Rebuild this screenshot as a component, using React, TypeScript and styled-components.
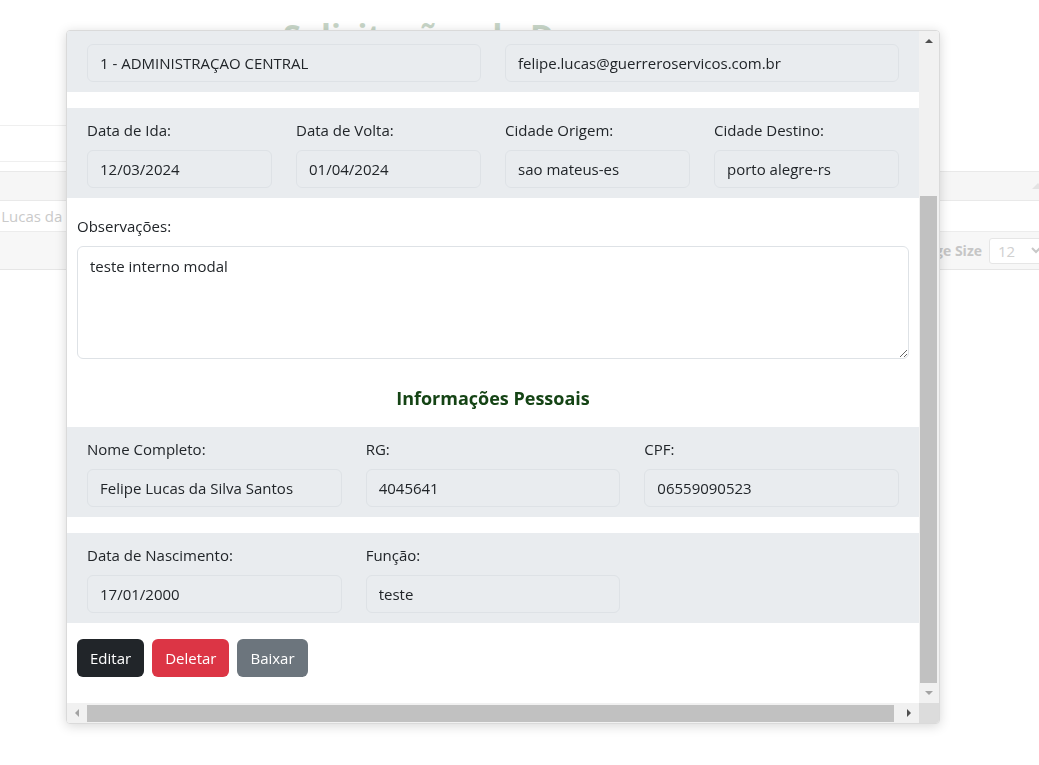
import React from 'react';
import styled, { createGlobalStyle } from 'styled-components';

const GlobalStyle = createGlobalStyle`
  html, body { margin: 0; padding: 0; background: #ffffff; }
  body {
    font-family: "Open Sans", "Noto Sans", "DejaVu Sans", sans-serif;
    color: #212529;
    overflow: hidden;
  }
  * { box-sizing: border-box; }
`;

/* ---------- background page (faded behind the modal) ---------- */

const Page = styled.div`
  width: 1039px;
  height: 765px;
  overflow: hidden;
`;

const Title = styled.h1`
  margin: 0;
  padding: 16px 0 0 283px;
  font-size: 32.5px;
  line-height: 39px;
  font-weight: 700;
  color: #c7d5c7;
  white-space: nowrap;
`;

const Scrolled = styled.div`
  margin-left: -52px;
  width: 1120px;
`;

const SearchBox = styled.div`
  margin-top: 70px;
  width: 720px;
  height: 37px;
  border: 1px solid #efefef;
  border-radius: 3px;
`;

const Table = styled.div`
  margin-top: 9px;
  display: flex;
  flex-direction: column;
`;

const HeadRow = styled.div`
  height: 30px;
  background: #f6f6f6;
  border-top: 1px solid #e9e9e9;
  border-bottom: 1px solid #e9e9e9;
  display: flex;
  justify-content: flex-end;
  align-items: center;
  padding-right: 24px;
`;

const SortCaret = styled.span`
  width: 0;
  height: 0;
  border-left: 6px solid transparent;
  border-right: 6px solid transparent;
  border-bottom: 6px solid #e3e3e3;
`;

const BodyRow = styled.div`
  height: 30px;
  display: flex;
  align-items: center;
  padding-left: 8px;
  font-size: 15px;
  color: #cacaca;
`;

const FootRow = styled.div`
  height: 39px;
  background: #f7f7f7;
  border-top: 1px solid #ececec;
  border-bottom: 1px solid #e6e6e6;
  display: flex;
  justify-content: flex-end;
  align-items: center;
  gap: 7px;
  padding-right: 17px;
`;

const PageSizeLabel = styled.span`
  font-size: 14px;
  font-weight: 700;
  color: #c6c6c6;
`;

const PageSizeSelect = styled.div`
  width: 62px;
  height: 26px;
  background: #ffffff;
  border: 1px solid #e6e6e6;
  border-radius: 3px;
  display: flex;
  align-items: center;
  justify-content: space-between;
  padding: 0 9px 0 8px;
  font-size: 15px;
  color: #d0d0d0;
`;

/* ---------- modal ---------- */

const Modal = styled.div`
  position: fixed;
  left: 66px;
  top: 30px;
  width: 874px;
  height: 694px;
  display: grid;
  grid-template-columns: 1fr 20px;
  grid-template-rows: 1fr 20px;
  background: #ffffff;
  border: 1px solid #dadada;
  border-radius: 4px;
  box-shadow: 0 2px 12px rgba(0, 0, 0, 0.16);
  overflow: hidden;
`;

const Viewport = styled.div`
  overflow: hidden;
`;

const Body = styled.div`
  margin-top: -29px;
  padding-bottom: 27px;
`;

const Band = styled.div<{ $cols: number }>`
  background: #e9ecef;
  padding: 10px 20px;
  margin-bottom: 16px;
  display: grid;
  grid-template-columns: repeat(${(p) => p.$cols}, 1fr);
  column-gap: 24px;
`;

const Field = styled.div`
  display: flex;
  flex-direction: column;
  min-width: 0;
`;

const Label = styled.label`
  display: block;
  font-size: 15px;
  line-height: 24px;
  margin-bottom: 8px;
  color: #212529;
`;

const Input = styled.input`
  width: 100%;
  height: 38px;
  padding: 6px 12px;
  font: inherit;
  font-size: 15px;
  line-height: 24px;
  color: #212529;
  background: #e9ecef;
  border: 1px solid #dee2e6;
  border-radius: 6px;
  outline: none;
`;

const Block = styled.div`
  padding: 0 10px;
`;

const TextArea = styled.textarea`
  display: block;
  width: 100%;
  height: 113px;
  padding: 7px 12px;
  font: inherit;
  font-size: 15px;
  line-height: 24px;
  color: #212529;
  background: #ffffff;
  border: 1px solid #dee2e6;
  border-radius: 6px;
  outline: none;
  resize: vertical;
`;

const SectionTitle = styled.h5`
  margin: 27px 0 17px;
  text-align: center;
  font-size: 18px;
  line-height: 24px;
  font-weight: 700;
  color: #154415;
`;

const Actions = styled.div`
  display: flex;
  gap: 8px;
  padding: 0 10px;
`;

const Button = styled.button<{ $variant: 'dark' | 'danger' | 'secondary' }>`
  height: 38px;
  padding: 6px 12px;
  font: inherit;
  font-size: 15px;
  line-height: 24px;
  color: #ffffff;
  border: 1px solid transparent;
  border-radius: 6px;
  cursor: pointer;
  background: ${(p) =>
    p.$variant === 'dark' ? '#212529' : p.$variant === 'danger' ? '#dc3545' : '#6c757d'};
`;

/* ---------- fake scrollbars ---------- */

const VBar = styled.div`
  background: #f1f1f1;
  display: flex;
  flex-direction: column;
`;

const HBar = styled.div`
  background: #f1f1f1;
  display: flex;
`;

const ArrowBtn = styled.div`
  width: 20px;
  height: 20px;
  flex: none;
  display: flex;
  align-items: center;
  justify-content: center;
`;

const VTrack = styled.div`
  flex: 1;
  display: flex;
  flex-direction: column;
  justify-content: flex-end;
  padding: 0 2px 0 1px;
`;

const VThumb = styled.div`
  height: 487px;
  background: #c1c1c1;
`;

const HTrack = styled.div`
  flex: 1;
  display: flex;
  align-items: center;
`;

const HThumb = styled.div`
  width: 807px;
  height: 17px;
  background: #c1c1c1;
`;

const Corner = styled.div`
  background: #dcdcdc;
`;

type Dir = 'up' | 'down' | 'left' | 'right';

const Arrow: React.FC<{ dir: Dir; active: boolean }> = ({ dir, active }) => {
  const pts: Record<Dir, string> = {
    up: '0,4 4,0 8,4',
    down: '0,0 8,0 4,4',
    left: '4,0 4,8 0,4',
    right: '0,0 4,4 0,8',
  };
  const vertical = dir === 'up' || dir === 'down';
  return (
    <svg width={vertical ? 8 : 4} height={vertical ? 4 : 8} viewBox={vertical ? '0 0 8 4' : '0 0 4 8'}>
      <polygon points={pts[dir]} fill={active ? '#505050' : '#a3a3a3'} />
    </svg>
  );
};

type F = { label: string; value: string };

const FieldItem: React.FC<F> = ({ label, value }) => (
  <Field>
    <Label>{label}</Label>
    <Input readOnly value={value} />
  </Field>
);

const rowA: F[] = [
  { label: 'Setor:', value: '1 - ADMINISTRAÇAO CENTRAL' },
  { label: 'E-mail:', value: 'felipe.lucas@guerreroservicos.com.br' },
];

const rowB: F[] = [
  { label: 'Data de Ida:', value: '12/03/2024' },
  { label: 'Data de Volta:', value: '01/04/2024' },
  { label: 'Cidade Origem:', value: 'sao mateus-es' },
  { label: 'Cidade Destino:', value: 'porto alegre-rs' },
];

const rowC: F[] = [
  { label: 'Nome Completo:', value: 'Felipe Lucas da Silva Santos' },
  { label: 'RG:', value: '4045641' },
  { label: 'CPF:', value: '06559090523' },
];

const rowD: F[] = [
  { label: 'Data de Nascimento:', value: '17/01/2000' },
  { label: 'Função:', value: 'teste' },
];

export default function App() {
  return (
    <>
      <GlobalStyle />
      <Page>
        <Title>Solicitações de Despesas</Title>
        <Scrolled>
          <SearchBox />
          <Table>
            <HeadRow>
              <SortCaret />
            </HeadRow>
            <BodyRow>Felipe Lucas da Silva Santos</BodyRow>
            <FootRow>
              <PageSizeLabel>Page Size</PageSizeLabel>
              <PageSizeSelect>
                <span>12</span>
                <svg width="10" height="7" viewBox="0 0 10 7">
                  <polyline points="1,1 5,5 9,1" fill="none" stroke="#c8c8c8" strokeWidth="2" />
                </svg>
              </PageSizeSelect>
            </FootRow>
          </Table>
        </Scrolled>
      </Page>

      <Modal>
        <Viewport>
          <Body>
            <Band $cols={2}>
              {rowA.map((f) => (
                <FieldItem key={f.label} {...f} />
              ))}
            </Band>
            <Band $cols={4}>
              {rowB.map((f) => (
                <FieldItem key={f.label} {...f} />
              ))}
            </Band>
            <Block>
              <Label>Observações:</Label>
              <TextArea readOnly value="teste interno modal" />
            </Block>
            <SectionTitle>Informações Pessoais</SectionTitle>
            <Band $cols={3}>
              {rowC.map((f) => (
                <FieldItem key={f.label} {...f} />
              ))}
            </Band>
            <Band $cols={3}>
              {rowD.map((f) => (
                <FieldItem key={f.label} {...f} />
              ))}
            </Band>
            <Actions>
              <Button $variant="dark">Editar</Button>
              <Button $variant="danger">Deletar</Button>
              <Button $variant="secondary">Baixar</Button>
            </Actions>
          </Body>
        </Viewport>
        <VBar>
          <ArrowBtn>
            <Arrow dir="up" active />
          </ArrowBtn>
          <VTrack>
            <VThumb />
          </VTrack>
          <ArrowBtn>
            <Arrow dir="down" active={false} />
          </ArrowBtn>
        </VBar>
        <HBar>
          <ArrowBtn>
            <Arrow dir="left" active={false} />
          </ArrowBtn>
          <HTrack>
            <HThumb />
          </HTrack>
          <ArrowBtn>
            <Arrow dir="right" active />
          </ArrowBtn>
        </HBar>
        <Corner />
      </Modal>
    </>
  );
}
